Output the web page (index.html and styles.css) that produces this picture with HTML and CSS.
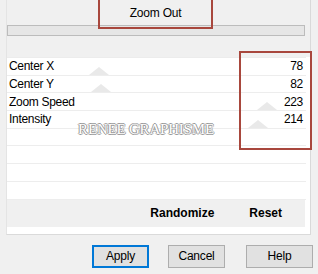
FILE: index.html
```html
<!DOCTYPE html>
<html lang="en">
<head>
  <meta charset="UTF-8" />
  <title>Zoom Out</title>
  <link rel="stylesheet" href="styles.css">
</head>
<body>
  <div class="panel">
    <div class="top">
      <div class="mode">Zoom Out</div>
      <div class="bar"></div>
      <div class="mark mark-mode"></div>
    </div>

    <div class="sheet">
      <div class="rows">
        <div class="row"><span>Center X</span><span class="thumb" style="left: 82px"></span><span class="val">78</span></div>
        <div class="row"><span>Center Y</span><span class="thumb" style="left: 84px"></span><span class="val">82</span></div>
        <div class="row"><span>Zoom Speed</span><span class="thumb" style="left: 250px"></span><span class="val">223</span></div>
        <div class="row"><span>Intensity</span><span class="thumb" style="left: 241px"></span><span class="val">214</span></div>
        <div class="row"></div>
        <div class="row"></div>
        <div class="row"></div>
        <div class="row"></div>
        <div class="stamp">RENEE GRAPHISME</div>
        <div class="mark mark-vals"></div>
      </div>
      <div class="actions">
        <span>Randomize</span>
        <span>Reset</span>
      </div>
    </div>
  </div>

  <div class="buttons">
    <button class="btn default">Apply</button>
    <button class="btn">Cancel</button>
    <button class="btn help">Help</button>
  </div>
</body>
</html>
```

FILE: styles.css
```css
* {
  box-sizing: border-box;
}

body {
  margin: 0;
  width: 318px;
  height: 274px;
  background: #f0f0f0;
  font-family: 'Liberation Sans', Arial, sans-serif;
  font-size: 12px;
  color: #000;
  overflow: hidden;
}

.panel {
  margin-left: 6px;
  width: 305px;
  border-left: 1px solid #e4e4e4;
  border-right: 1px solid #d9d9d9;
  border-bottom: 1px solid #dadada;
}

.top {
  position: relative;
  height: 57px;
  padding-top: 6px;
}

.mode {
  margin-left: 92px;
  width: 113px;
  text-align: center;
  height: 19px;
  line-height: 14px;
  letter-spacing: -0.2px;
}

.bar {
  width: 298px;
  height: 11px;
  background: #e6e6e6;
  border: 1px solid #bcbcbc;
}

.mark {
  position: absolute;
  border: 2px solid #a8473d;
  z-index: 3;
}

.mark-mode {
  left: 91px;
  top: -2px;
  width: 115px;
  height: 31px;
}

.sheet {
  background: #fff;
  padding-bottom: 7px;
}

.rows {
  position: relative;
  width: 299px;
  border-top: 1px solid #ececec;
}

.row {
  position: relative;
  display: flex;
  justify-content: space-between;
  align-items: center;
  height: 17.7px;
  padding: 0 3px 0 2px;
  border-bottom: 1.5px solid #ededed;
  letter-spacing: -0.3px;
}

.row span {
  position: relative;
  z-index: 1;
}

.row .thumb {
  position: absolute;
  z-index: 0;
  bottom: 0;
  width: 0;
  height: 0;
  border-left: 10px solid transparent;
  border-right: 10px solid transparent;
  border-bottom: 8px solid #e9e9e9;
}

.stamp {
  position: absolute;
  left: 68px;
  top: 63px;
  width: 142px;
  text-align: center;
  font-family: 'Liberation Serif', 'Times New Roman', serif;
  font-size: 15px;
  color: #fff;
  letter-spacing: -0.2px;
  text-shadow: 1px 0 0 #9a9a9a, -1px 0 0 #9a9a9a, 0 1px 0 #9a9a9a, 0 -1px 0 #9a9a9a;
}

.mark-vals {
  left: 232px;
  top: -7px;
  width: 73px;
  height: 99px;
}

.actions {
  display: flex;
  justify-content: flex-end;
  align-items: center;
  gap: 35px;
  width: 298px;
  height: 27px;
  padding-right: 23px;
  background: #f0f0f0;
  font-weight: bold;
  font-size: 12px;
}

.buttons {
  display: flex;
  margin-top: 10px;
  padding-left: 92px;
  gap: 19px;
}

.btn {
  width: 57px;
  height: 23px;
  padding: 0;
  background: #e1e1e1;
  border: 1px solid #adadad;
  font-family: 'Liberation Sans', Arial, sans-serif;
  font-size: 12px;
  color: #000;
  letter-spacing: -0.2px;
}

.btn.default {
  border: 2px solid #0078d7;
}

.btn.help {
  width: 67px;
  margin-left: 2px;
}
```
